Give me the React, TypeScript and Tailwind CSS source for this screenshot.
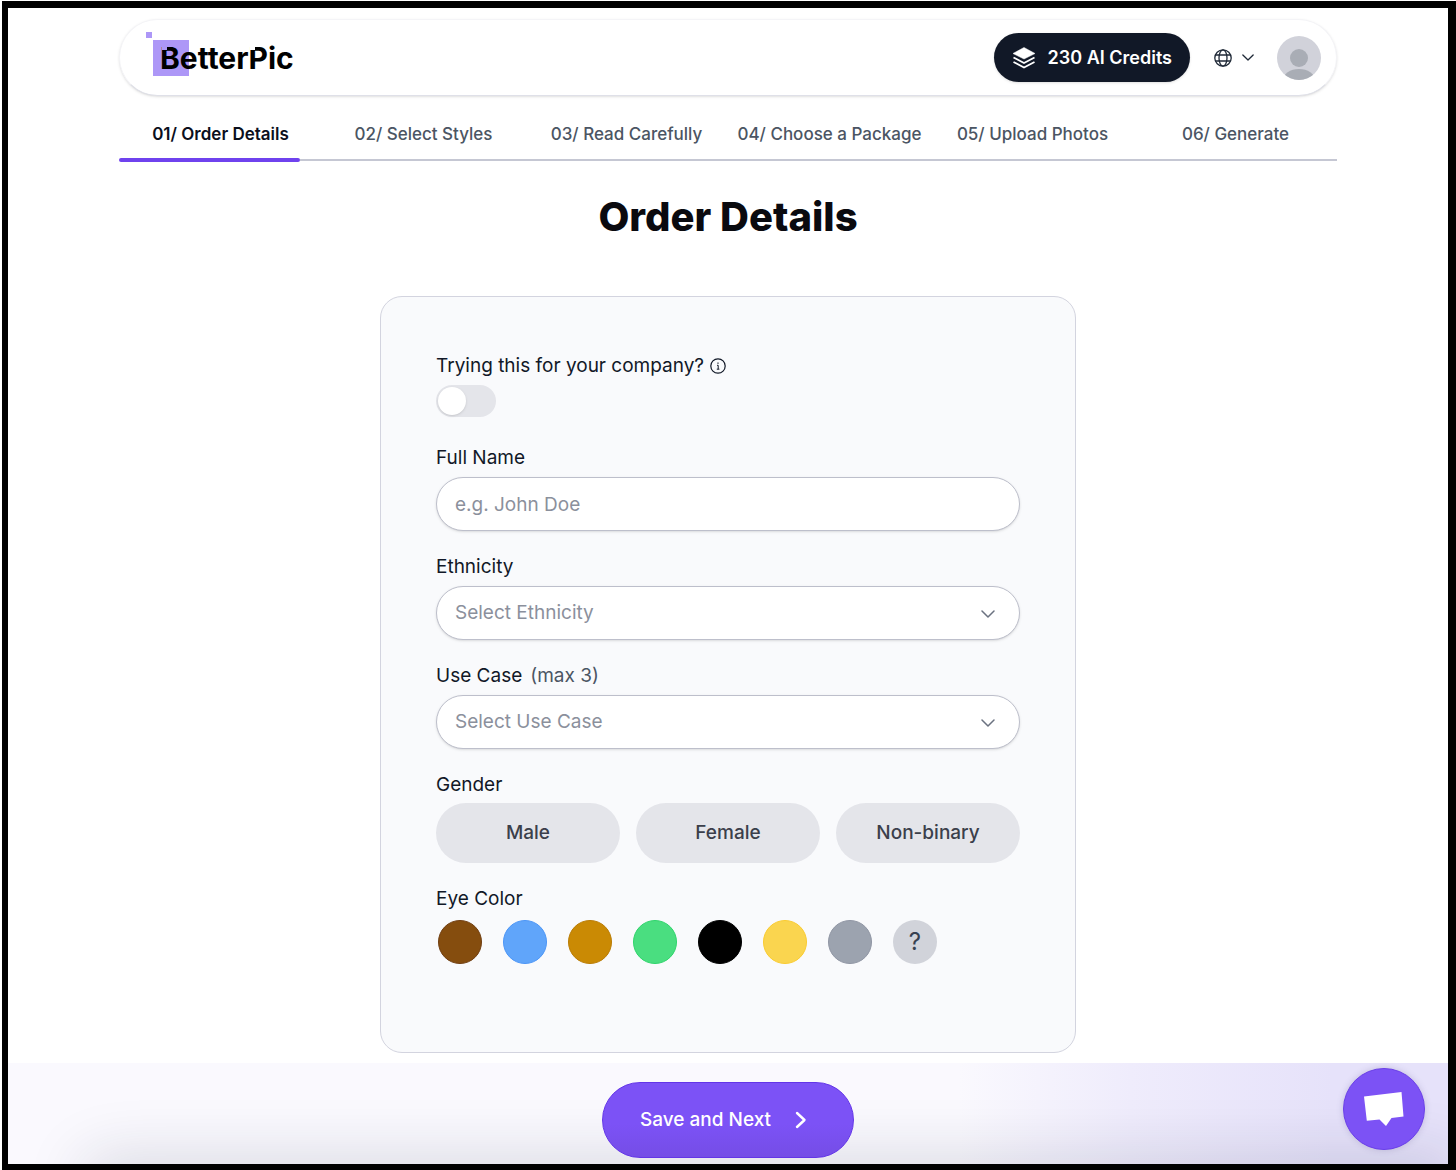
import { useState } from "react";

const steps = [
    "01/ Order Details",
    "02/ Select Styles",
    "03/ Read Carefully",
    "04/ Choose a Package",
    "05/ Upload Photos",
    "06/ Generate",
];

const genders = ["Male", "Female", "Non-binary"];

const eyeColors = [
    { name: "Brown", style: "bg-[#854d0e] border-[#713f12]" },
    { name: "Blue", style: "bg-[#60a5fa] border-[#4c96f7]" },
    { name: "Hazel", style: "bg-[#ca8a04] border-[#ba7c04]" },
    { name: "Green", style: "bg-[#4ade80] border-[#2fd56b]" },
    { name: "Black", style: "bg-black border-black" },
    { name: "Amber", style: "bg-[#fad54f] border-[#facc30]" },
    { name: "Gray", style: "bg-[#9ca3af] border-[#9096a4]" },
];

function Chevron({ className }: { className: string }) {
    return (
        <svg viewBox="0 0 14 8" className={className} fill="none" stroke="currentColor" aria-hidden="true">
            <path d="M1 1l6 6 6-6" strokeLinecap="round" strokeLinejoin="round" />
        </svg>
    );
}

function Logo() {
    return (
        <a href="#" className="relative flex h-9 items-center pl-[7px] text-black">
            <span className="absolute left-0 top-0 size-9 bg-[#ad97f7]" />
            <span className="absolute -left-[7px] -top-2 size-[6px] bg-[#ad97f7]" />
            <span className="relative text-[30px] font-bold leading-9">
                {/* notches cut out of the B and the P */}
                <span className="absolute left-[2px] top-[7px] h-[3px] w-[5px] bg-[#ad97f7]" />
                Better
                <span className="relative">
                    <span className="absolute left-[2px] top-[7px] h-[3px] w-[5px] bg-white" />
                    Pic
                </span>
            </span>
        </a>
    );
}

function Header() {
    return (
        <header className="flex h-[77px] items-center justify-between rounded-full border border-[#f4f4f7] border-b-[#dfe0e8] bg-white pl-[33px] pr-[15px] shadow-sm">
            <Logo />
            <div className="flex items-center">
                <button className="flex h-[49px] items-center gap-3 rounded-full bg-[#111827] px-[18px] text-lg font-semibold text-white shadow-sm">
                    <svg viewBox="0 0 24 24" className="size-6" fill="none" stroke="currentColor" strokeWidth="1.8" aria-hidden="true">
                        <path d="M12 1.500L23 7.500L12 13L1 7.500Z" fill="currentColor" strokeWidth="0.5" strokeLinejoin="round" />
                        <path d="M1.500 11.500L12 17L22.500 11.500" />
                        <path d="M1.500 16L12 21.500L22.500 16" />
                    </svg>
                    230 AI Credits
                </button>
                <button aria-label="Language" className="ml-6 flex items-center gap-[10px] text-[#1f2937]">
                    <svg viewBox="0 0 18 18" className="size-[18px]" fill="none" stroke="currentColor" strokeWidth="1.300" aria-hidden="true">
                        <circle cx="9" cy="9" r="8.200" />
                        <ellipse cx="9" cy="9" rx="4" ry="8.200" />
                        <path d="M1.600 6h14.800M1.600 12h14.800" />
                    </svg>
                    <Chevron className="h-[7px] w-3 stroke-[1.500]" />
                </button>
                <button aria-label="Account" className="ml-[23px]">
                    <svg viewBox="0 0 44 44" className="size-11" aria-hidden="true">
                        <clipPath id="avatar">
                            <circle cx="22" cy="22" r="22" />
                        </clipPath>
                        <g clipPath="url(#avatar)">
                            <rect width="44" height="44" fill="#d1d2da" />
                            <circle cx="22" cy="22" r="9" fill="#a9adb5" />
                            <ellipse cx="22" cy="44" rx="16" ry="11" fill="#a9adb5" />
                        </g>
                    </svg>
                </button>
            </div>
        </header>
    );
}

function Steps() {
    return (
        <nav className="mt-[26px]">
            <ol className="grid grid-cols-6 text-[17px] leading-6">
                {steps.map((step, i) => (
                    <li key={step} className="whitespace-nowrap text-center">
                        <a href="#" className={i === 0 ? "font-semibold text-[#0b0f1c]" : "font-medium text-[#4b5563]"}>
                            {step}
                        </a>
                    </li>
                ))}
            </ol>
            <div className="mt-3 flex h-1 items-center">
                <div className="h-1 w-[181px] rounded-full bg-[#6f42ee]" />
                <div className="h-[2px] flex-1 bg-[#c5c7d3]" />
            </div>
        </nav>
    );
}

function SelectField({ id, label, hint }: { id: string; label: string; hint?: string }) {
    return (
        <div className="mt-[22px]">
            <label htmlFor={id} className="block leading-7">
                {label}
                {hint && <span className="ml-2 text-[#4b5563]">{hint}</span>}
            </label>
            <div className="relative mt-[5px]">
                <select
                    id={id}
                    defaultValue=""
                    className="h-[54px] w-full appearance-none rounded-full border border-[#bdbfcb] bg-white px-[18px] text-[#8b909c] shadow-sm"
                >
                    <option value="">Select {label}</option>
                </select>
                <Chevron className="pointer-events-none absolute right-[25px] top-6 h-2 w-[14px] stroke-[1.500] text-[#6b7280]" />
            </div>
        </div>
    );
}

function OrderForm() {
    const [company, setCompany] = useState(false);
    const [gender, setGender] = useState("");

    return (
        <form id="order" className="mx-auto mt-[52px] w-full max-w-[696px] rounded-[22px] border border-[#d3d4df] bg-[#f9fafc] px-[55px] pb-[86px] pt-[55px] text-[19px] text-[#111827]">
            <label htmlFor="company" className="flex items-center gap-[6px] leading-7">
                Trying this for your company?
                <svg viewBox="0 0 16 16" className="size-4" fill="none" stroke="currentColor" strokeWidth="1.200" aria-hidden="true">
                    <circle cx="8" cy="8" r="7.200" />
                    <path d="M7 7.300H8.200V11M6.800 11.200H9.400" strokeWidth="1" />
                    <circle cx="8" cy="5.100" r="0.400" fill="currentColor" strokeWidth="0.6" />
                </svg>
            </label>
            <div className="relative mt-[5px] h-8 w-[60px]">
                <input
                    id="company"
                    type="checkbox"
                    checked={company}
                    onChange={(e) => setCompany(e.target.checked)}
                    className="peer block h-8 w-[60px] appearance-none rounded-full bg-[#e4e5ea] checked:bg-[#7c52f5]"
                />
                <span className="pointer-events-none absolute left-[2px] top-[2px] size-7 rounded-full bg-white shadow-sm peer-checked:left-[30px]" />
            </div>

            <div className="mt-[27px]">
                <label htmlFor="name" className="block leading-7">Full Name</label>
                <input
                    id="name"
                    type="text"
                    placeholder="e.g. John Doe"
                    className="mt-[5px] block h-[54px] w-full rounded-full border border-[#bdbfcb] bg-white px-[18px] shadow-sm placeholder:text-[#8b909c]"
                />
            </div>

            <SelectField id="ethnicity" label="Ethnicity" />
            <SelectField id="usecase" label="Use Case" hint="(max 3)" />

            <fieldset className="mt-[22px]">
                <legend className="leading-7">Gender</legend>
                <div className="mt-1 grid grid-cols-3 gap-4">
                    {genders.map((item) => (
                        <button
                            key={item}
                            type="button"
                            aria-pressed={gender === item}
                            onClick={() => setGender(item)}
                            className="h-[60px] rounded-full bg-[#e4e5ea] font-medium text-[#3b3f4b] aria-pressed:bg-[#d6d0f5]"
                        >
                            {item}
                        </button>
                    ))}
                </div>
            </fieldset>

            <fieldset className="mt-[22px]">
                <legend className="leading-7">Eye Color</legend>
                <div className="mt-[5px] flex gap-[21px] p-[2px]">
                    {eyeColors.map((color) => (
                        <button key={color.name} type="button" aria-label={color.name} className={`size-11 rounded-full border ${color.style}`} />
                    ))}
                    <button type="button" className="size-11 rounded-full bg-[#d1d3da] text-2xl text-[#374151]">?</button>
                </div>
            </fieldset>
        </form>
    );
}

function Footer() {
    return (
        <footer className="relative mt-auto flex justify-center bg-[linear-gradient(to_right,#faf9fe_66%,#efecfc_78%,#e6e2fa_92%)] pb-[6px] pt-[19px]">
            <div className="pointer-events-none absolute inset-0 overflow-hidden">
                <div className="absolute -bottom-10 left-20 right-0 h-10 rounded-l-full shadow-[0_0_60px_8px_rgba(30,35,60,0.15)]" />
            </div>
            <button
                form="order"
                className="relative flex h-[76px] items-center gap-6 rounded-full border border-[#6335e8] bg-linear-to-b from-[#7c52f6] from-55% to-[#754de6] pl-[37px] pr-[46px] text-[19px] font-medium text-white"
            >
                Save and Next
                <svg viewBox="0 0 12 18" className="h-[18px] w-3" fill="none" stroke="currentColor" strokeWidth="2.400" strokeLinecap="round" strokeLinejoin="round" aria-hidden="true">
                    <path d="M2 2l7.500 7L2 16" />
                </svg>
            </button>
            <button aria-label="Open chat" className="absolute right-[23px] top-[5px] flex size-[82px] items-center justify-center rounded-full border border-[#6a3fe8] bg-[#7c52f5] shadow-[0_0_6px_rgba(90,80,140,0.25)]">
                <svg viewBox="0 0 40 34" className="h-[34px] w-10" fill="#fff" aria-hidden="true">
                    <path d="M0 4.500L37.500 0L39.500 24.500L27.500 26L22 34L15.500 27.500L2.800 28.800Z" />
                </svg>
            </button>
        </footer>
    );
}

function App() {
    return (
        <div className="flex min-h-screen flex-col bg-white pl-[2px] pt-px font-['Inter',sans-serif]">
            <div className="flex flex-1 flex-col border-b-[6px] border-l-[6px] border-r-8 border-t-[7px] border-black">
                <main className="mx-auto mb-[10px] w-full max-w-[1218px] pt-[11px]">
                    <Header />
                    <Steps />
                    <h1 className="mt-7 text-center text-[40px] font-extrabold leading-[54px] text-[#0a0a0f]">Order Details</h1>
                    <OrderForm />
                </main>
                <Footer />
            </div>
        </div>
    );
}

export default App;
